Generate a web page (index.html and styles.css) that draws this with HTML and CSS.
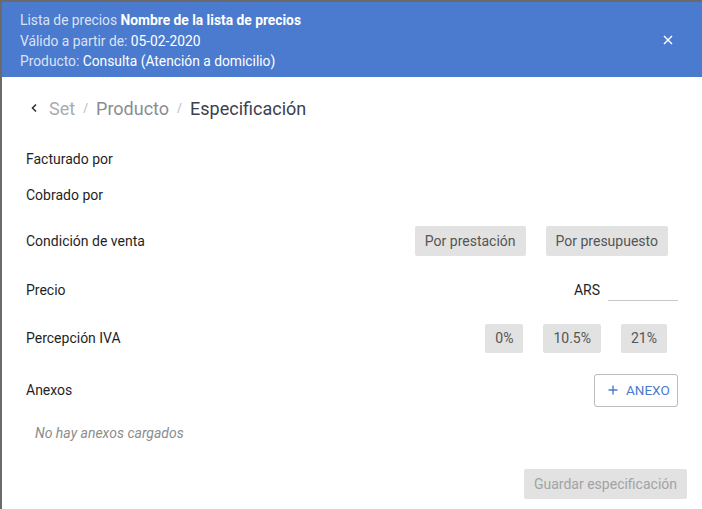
FILE: index.html
```html
<!DOCTYPE html>
<html lang="es">
<head>
<meta charset="utf-8">
<title>Especificación</title>
<link rel="stylesheet" href="styles.css">
</head>
<body>
<div class="dialog">
  <header class="banner">
    <div class="banner-text">
      <div class="line">Lista de precios <b class="strong">Nombre de la lista de precios</b></div>
      <div class="line">Válido a partir de: <span class="value">05-02-2020</span></div>
      <div class="line">Producto: <span class="value">Consulta (Atención a domicilio)</span></div>
    </div>
    <button class="close" aria-label="Cerrar">
      <svg width="10" height="10" viewBox="0 0 10 10"><path d="M1 1L9 9M9 1L1 9" stroke="#fff" stroke-width="1.5" fill="none"/></svg>
    </button>
  </header>

  <nav class="crumbs">
    <svg class="back" width="8" height="10" viewBox="0 0 8 10"><path d="M6 1.5L2.5 5L6 8.5" stroke="#333" stroke-width="1.6" fill="none"/></svg>
    <span class="crumb c1">Set</span>
    <span class="sep">/</span>
    <span class="crumb c2">Producto</span>
    <span class="sep">/</span>
    <span class="crumb c3">Especificación</span>
  </nav>

  <section class="form">
    <div class="row">
      <span class="label">Facturado por</span>
    </div>
    <div class="row">
      <span class="label">Cobrado por</span>
    </div>
    <div class="row r3">
      <span class="label">Condición de venta</span>
      <div class="group">
        <button class="chip tall">Por prestación</button>
        <button class="chip tall">Por presupuesto</button>
      </div>
    </div>
    <div class="row r4">
      <span class="label">Precio</span>
      <div class="price">
        <span class="currency">ARS</span>
        <span class="input"></span>
      </div>
    </div>
    <div class="row r5">
      <span class="label">Percepción IVA</span>
      <div class="group g2">
        <button class="chip">0%</button>
        <button class="chip">10.5%</button>
        <button class="chip">21%</button>
      </div>
    </div>
    <div class="row r6">
      <span class="label">Anexos</span>
      <button class="add">
        <svg width="10" height="10" viewBox="0 0 10 10"><path d="M5 0.5V9.5M0.5 5H9.5" stroke="#4a7bcf" stroke-width="1.4" fill="none"/></svg>
        <span>ANEXO</span>
      </button>
    </div>
    <div class="empty">No hay anexos cargados</div>
  </section>

  <footer class="footer">
    <button class="save" disabled>Guardar especificación</button>
  </footer>
</div>
</body>
</html>
```

FILE: styles.css
```css
* { box-sizing: border-box; }

html, body {
  margin: 0;
  padding: 0;
  height: 100%;
}

body {
  background: #6a6a6a;
  font-family: Roboto, "Liberation Sans", sans-serif;
  overflow: hidden;
}

.dialog {
  margin: 2px 0 0 2px;
  width: 700px;
  height: 520px;
  background: #fff;
}

.banner {
  background: #4a7bcf;
  height: 75px;
  padding: 8px 29px 0 18px;
  display: flex;
  justify-content: space-between;
  align-items: flex-start;
}

.banner-text .line {
  font-size: 13.8px;
  line-height: 20.5px;
  color: rgba(255, 255, 255, 0.8);
}

.banner-text .strong {
  color: #fff;
  font-weight: 700;
}

.banner-text .value {
  color: #fff;
  font-weight: 400;
}

.close {
  background: none;
  border: 0;
  padding: 0;
  margin-top: 25px;
  width: 10px;
  height: 10px;
  display: flex;
}

.crumbs {
  display: flex;
  align-items: center;
  height: 40px;
  margin-top: 11px;
  padding-left: 28px;
  font-size: 18px;
}

.back { margin-right: 11px; }

.crumb.c1 { color: #a9abb0; }
.crumb.c2 { color: #8a8d93; }
.crumb.c3 { color: #3b4050; }

.sep {
  color: #b5b7bb;
  font-size: 12px;
  margin: 0 8px;
}

.form {
  margin-top: 13px;
  padding: 0 24px 0 24px;
}

.row {
  display: flex;
  align-items: center;
  justify-content: space-between;
  height: 36px;
}

.r3 { margin-top: 10px; }
.r4 { margin-top: 13px; }
.r5 { margin-top: 12px; }
.r6 { margin-top: 16px; }

.label {
  font-size: 14px;
  color: #1f1f1f;
}

.group {
  display: flex;
  gap: 20px;
  margin-right: 10px;
}

.g2 { gap: 20px; margin-right: 11px; }

.chip {
  font-family: inherit;
  font-size: 14px;
  color: #555;
  background: #e2e2e2;
  border: 0;
  border-radius: 2px;
  height: 29px;
  padding: 0 10px;
}

.chip.tall {
  height: 30px;
  padding: 0 10px;
}

.price {
  display: flex;
  align-items: center;
}

.currency {
  font-size: 14px;
  color: #1f1f1f;
  margin-right: 8px;
}

.input {
  width: 70px;
  height: 22px;
  border-bottom: 1px solid #c9c9c9;
}

.add {
  display: flex;
  align-items: center;
  gap: 8px;
  height: 33px;
  width: 84px;
  padding: 0 0 0 13px;
  background: #fff;
  border: 1px solid #bcbcbc;
  border-radius: 3px;
  font-family: inherit;
  font-size: 13.5px;
  color: #4a7bcf;
}

.empty {
  margin-top: 15px;
  padding-left: 9px;
  font-size: 14px;
  line-height: 20px;
  font-style: italic;
  color: #8c8c8c;
}

.footer {
  display: flex;
  justify-content: flex-end;
  padding-right: 15px;
  margin-top: 26px;
}

.save {
  font-family: inherit;
  font-size: 14px;
  color: #a3a3a3;
  background: #e2e2e2;
  border: 0;
  border-radius: 2px;
  height: 30px;
  width: 163px;
  padding: 0;
}
```
